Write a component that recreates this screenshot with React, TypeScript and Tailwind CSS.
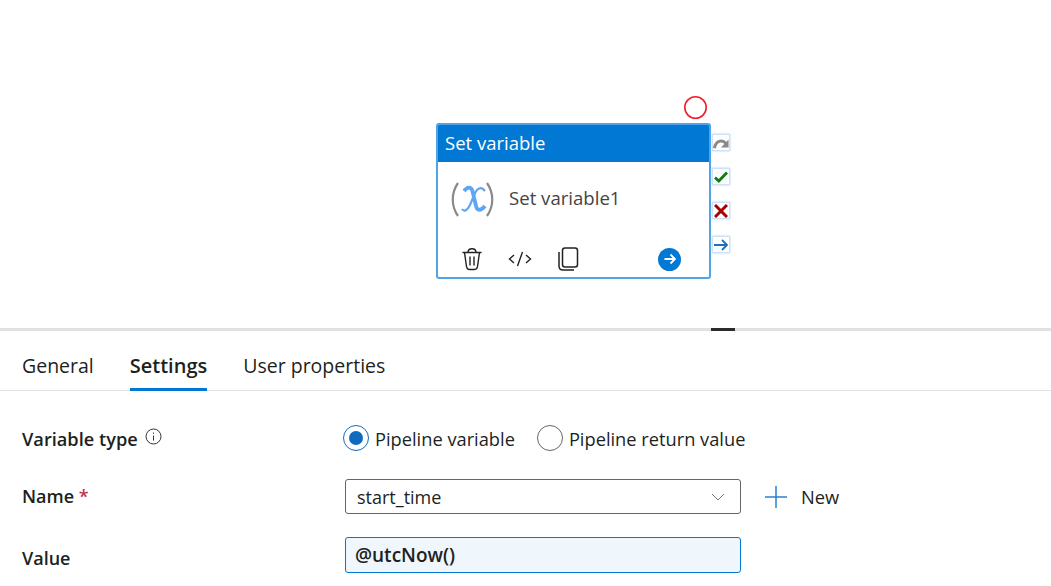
const font = "font-['Open_Sans','Noto_Sans',sans-serif]";

function Port({ children }: { children: React.ReactNode }) {
  return (
    <div className="w-[18px] h-[17px] bg-white border border-[#cfe2f5] shadow-[0_0_2px_#a9cdf0] flex items-center justify-center">
      {children}
    </div>
  );
}

function ActivityNode() {
  return (
    <div className="absolute left-[436px] top-[123px] flex items-start">
      <div className="w-[275px] h-[156px] bg-white border-2 border-[#4fa3e6] rounded-[3px] flex flex-col overflow-hidden">
        <div className="h-[38px] bg-[#0078d4] text-white text-[18.5px] leading-[38px] pl-[7px] -mt-px">
          Set variable
        </div>
        <div className="flex items-center pl-[12px] mt-[14px] h-[44px]">
          <svg width="46" height="44" viewBox="0 0 46 44" fill="none">
            <path d="M8 7 C1 17 1 30 8 40" stroke="#8a8a8a" strokeWidth="2.200" />
            <path d="M37 7 C44 17 44 30 37 40" stroke="#8a8a8a" strokeWidth="2.200" />
            <path d="M14 15 C17 11 21 10 22.500 15 L26 30 C27 35 31 35 35 30" stroke="#5ea6f2" strokeWidth="3.800" />
            <path d="M35 15 C32 11 28 11 25 17 L20 29 C17 35 14 36 12 33" stroke="#5ea6f2" strokeWidth="2.200" />
          </svg>
          <span className="ml-[13px] text-[18.6px] text-[#444]">Set variable1</span>
        </div>
        <div className="flex items-center mt-[24px] pl-[22px] h-[30px]">
          <svg width="24" height="24" viewBox="0 0 24 24" fill="none" stroke="#222" strokeWidth="1.400">
            <path d="M2.500 5.500h19M8 5.500c0-5 8-5 8 0M4.500 5.500l2 14c.3 2 1.400 3 3 3h5c1.600 0 2.700-1 3-3l2-14M10 9.500v9M14 9.500v9" />
          </svg>
          <svg className="ml-[24px]" width="24" height="16" viewBox="0 0 24 16" fill="none" stroke="#222" strokeWidth="1.400">
            <path d="M6 4 1.500 8 6 12M18 4l4.500 4L18 12M14.500 1l-5 14" />
          </svg>
          <svg className="ml-[24px]" width="24" height="24" viewBox="0 0 24 24" fill="none" stroke="#222" strokeWidth="1.500">
            <rect x="6.500" y="1" width="15" height="19" rx="2.500" />
            <path d="M3 5v14c0 2.500 1.500 4 4 4h11" />
          </svg>
          <div className="ml-[78px] w-[23px] h-[23px] rounded-full bg-[#0078d4] flex items-center justify-center">
            <svg width="14" height="14" viewBox="0 0 14 14" fill="none" stroke="#fff" strokeWidth="1.800">
              <path d="M1.500 7h10.500M7.500 2.500 12 7l-4.500 4.500" />
            </svg>
          </div>
        </div>
      </div>
      <div className="flex flex-col gap-[17px] pl-[1px] pt-[11px]">
        <Port>
          <svg width="18" height="14" viewBox="0 0 18 14" fill="none">
            <path d="M1.500 13C3 5 10 2 15 8" stroke="#8a8a8a" strokeWidth="3.400" />
            <path d="M17.500 3v9H9z" fill="#8a8a8a" />
          </svg>
        </Port>
        <Port>
          <svg width="14" height="12" viewBox="0 0 14 12" fill="none" stroke="#107c10" strokeWidth="2.800">
            <path d="M1 6.500l3.800 3.500L13 1.500" />
          </svg>
        </Port>
        <Port>
          <svg width="14" height="14" viewBox="0 0 14 14" fill="none" stroke="#a80000" strokeWidth="3">
            <path d="M1 1l12 12M13 1 1 13" />
          </svg>
        </Port>
        <Port>
          <svg width="14" height="12" viewBox="0 0 14 12" fill="none" stroke="#1f6fc0" strokeWidth="1.800">
            <path d="M0 6h13M8 1l5 5-5 5" />
          </svg>
        </Port>
      </div>
    </div>
  );
}

export default function App() {
  return (
    <div className={`${font} w-[1051px] h-[586px] overflow-hidden bg-white text-[#201f1e]`}>
      {/* Canvas */}
      <div className="relative h-[328px]">
        <svg className="absolute left-[683px] top-[95px]" width="25" height="25" viewBox="0 0 25 25" fill="none">
          <circle cx="12.500" cy="12.500" r="10.700" stroke="#f01f2b" strokeWidth="1.600" />
        </svg>
        <ActivityNode />
      </div>

      {/* Splitter */}
      <div className="h-[3px] bg-[#e1e1e1] flex pl-[711px]">
        <div className="w-[24px] h-[3px] bg-[#2b2b2b]" />
      </div>

      {/* Tabs */}
      <div className="flex gap-[36px] pl-[22px] h-[60px] border-b border-[#e1e1e1] text-[19.5px]">
        <div className="pt-[20px]">General</div>
        <div className="pt-[20px] h-[60px] text-[20px] font-semibold border-b-[3px] border-[#0078d4]">Settings</div>
        <div className="pt-[20px]">User properties</div>
      </div>

      {/* Form */}
      <div className="pl-[22px] text-[18px]">
        <div className="flex items-center h-[30px] mt-[32px]">
          <div className="w-[321px] flex items-start font-semibold text-[18.2px] mt-[4px]">
            Variable type
            <svg className="ml-[7px] mt-[2px]" width="17" height="17" viewBox="0 0 17 17" fill="none" stroke="#333" strokeWidth="1">
              <circle cx="8.500" cy="8.500" r="7.500" />
              <path d="M8.500 7.500v5M8.500 4.500v1.300" />
            </svg>
          </div>
          <div className="flex items-center text-[18.25px]">
            <div className="w-[26px] h-[26px] rounded-full border border-[#0f6cbd] flex items-center justify-center">
              <div className="w-[14px] h-[14px] rounded-full bg-[#0f6cbd]" />
            </div>
            <span className="ml-[6px] mt-[2px]">Pipeline variable</span>
            <div className="ml-[22px] w-[26px] h-[26px] rounded-full border border-[#666]" />
            <span className="ml-[6px] mt-[2px]">Pipeline return value</span>
          </div>
        </div>

        <div className="flex items-center h-[35px] mt-[26px]">
          <div className="w-[323px] font-semibold">
            Name <span className="text-[#c4314b]">*</span>
          </div>
          <div className="w-[396px] h-[35px] border border-[#666] rounded-[3px] flex items-center justify-between pl-[11px] pr-[15px]">
            <span className="pt-[1px]">start_time</span>
            <svg width="14" height="8" viewBox="0 0 14 8" fill="none" stroke="#777" strokeWidth="1">
              <path d="M1 1l6 6 6-6" />
            </svg>
          </div>
          <svg className="ml-[23px]" width="24" height="24" viewBox="0 0 24 24" fill="none" stroke="#2a7fd0" strokeWidth="1.500">
            <path d="M12 1v22M1 12h22" />
          </svg>
          <span className="ml-[13px] text-[18.300px]">New</span>
        </div>

        <div className="flex items-center h-[36px] mt-[23px]">
          <div className="w-[323px] font-semibold pt-[6px]">Value</div>
          <div className="w-[396px] h-[36px] border border-[#0078d4] rounded-[3px] bg-[#eff6fc] flex items-center pl-[9px] text-[19px] font-semibold">
            @utcNow()
          </div>
        </div>
      </div>
    </div>
  );
}
